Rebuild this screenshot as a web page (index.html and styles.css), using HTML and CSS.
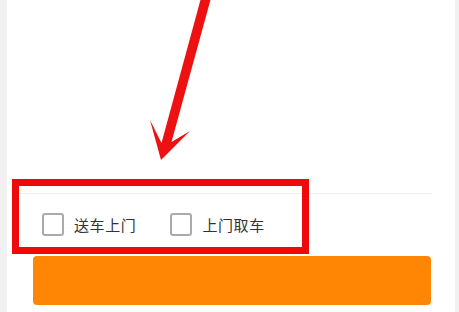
FILE: index.html
```html
<!DOCTYPE html>
<html lang="zh-CN">
<head>
    <meta charset="UTF-8">
    <meta name="viewport" content="width=device-width, initial-scale=1.0">
    <title>送车上门</title>
    <link rel="stylesheet" href="styles.css">
</head>
<body>
    <div class="panel">
        <div class="content"></div>
        <div class="divider"></div>

        <div class="options">
            <label class="option">
                <span class="check"></span>
                <span class="label">送车上门</span>
            </label>
            <label class="option">
                <span class="check"></span>
                <span class="label">上门取车</span>
            </label>
        </div>

        <button class="submit"></button>
    </div>

    <!-- annotation -->
    <div class="mark-box"></div>
    <svg class="mark-arrow" width="459" height="312" viewBox="0 0 459 312">
        <polygon points="201,-2 211,-2 171.5,142 190,131 161,160 150,120 161.5,143" fill="#ee1111"/>
    </svg>
</body>
</html>
```

FILE: styles.css
```css
body {
    margin: 0;
    padding: 0;
    background-color: #f1f1f1;
    font-family: "Noto Sans CJK SC", "Noto Sans", sans-serif;
}

.panel {
    margin: 0 4px 0 7px;
    height: 312px;
    background-color: #fff;
}

.content {
    height: 193px;
}

.divider {
    height: 1px;
    margin: 0 23px 0 5px;
    background-color: #f0f0f0;
}

.options {
    display: flex;
    align-items: center;
    gap: 34px;
    padding: 19px 0 0 35px;
    height: 23px;
}

.option {
    display: flex;
    align-items: center;
    gap: 10px;
}

.check {
    width: 22px;
    height: 23px;
    box-sizing: border-box;
    border: 2px solid #aaa;
    border-radius: 3px;
}

.label {
    font-size: 15px;
    letter-spacing: 0.6px;
    color: #333;
    line-height: 23px;
}

.submit {
    display: block;
    margin: 20px 24px 0 26px;
    width: calc(100% - 50px);
    height: 49px;
    border: none;
    border-radius: 4px;
    background-color: #ff8505;
}

.mark-box {
    position: absolute;
    left: 12px;
    top: 179px;
    width: 297px;
    height: 75px;
    box-sizing: border-box;
    border: 7px solid #ee0a0a;
}

.mark-arrow {
    position: absolute;
    left: 0;
    top: 0;
}
```
